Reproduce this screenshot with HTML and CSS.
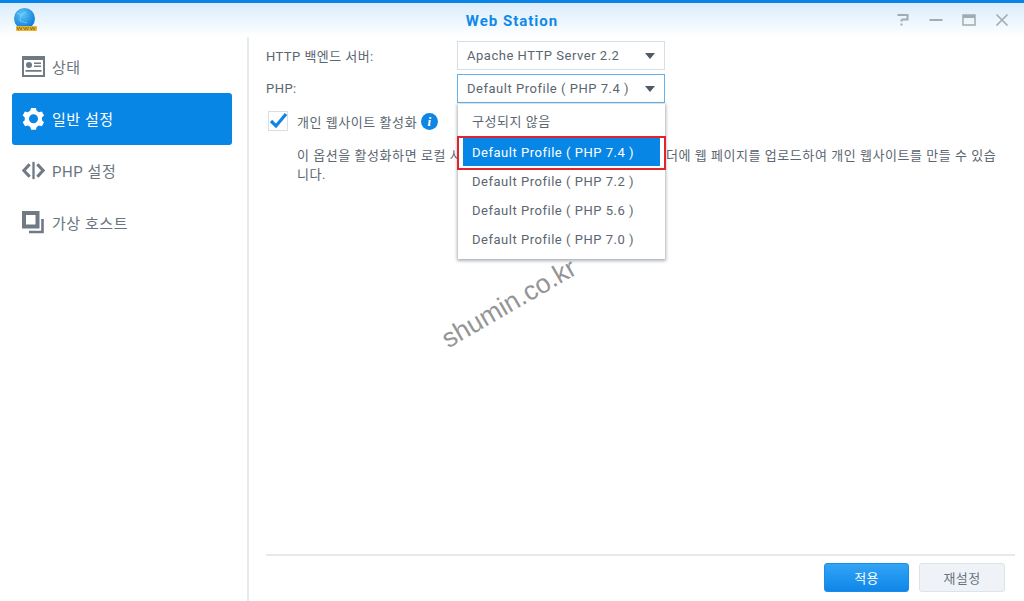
FILE: index.html
```html
<!DOCTYPE html>
<html lang="ko">
<head>
<meta charset="utf-8">
<title>Web Station</title>
<link rel="stylesheet" href="styles.css">
</head>
<body>
<div class="window">
  <header class="titlebar">
    <svg class="app-icon" viewBox="0 0 24 24">
      <defs>
        <radialGradient id="globe" cx="40%" cy="30%" r="75%">
          <stop offset="0" stop-color="#5cc8f8"/>
          <stop offset="1" stop-color="#0a74d6"/>
        </radialGradient>
      </defs>
      <circle cx="11.500" cy="10.500" r="10.500" fill="url(#globe)"/>
      <path d="M4 5l4 2 5-3M8 7l-1 6 7 2" fill="none" stroke="#a8dcfb" stroke-width=".5"/>
      <rect x="3" y="18" width="21" height="5" rx="1" fill="#eab428"/>
      <path d="M4 19l1.300 3 1.300-3 1.300 3 1.300-3M10.500 19l1.300 3 1.300-3 1.300 3 1.300-3M17 19l1.300 3 1.300-3 1.300 3 1.300-3" fill="none" stroke="#77673a" stroke-width=".7"/>
    </svg>
    <h1 class="title">Web Station</h1>
    <div class="win-controls">
      <svg class="win-icon" viewBox="0 0 14 14"><path d="M1.500 2h10v4.500h-6M5.500 6.500v2M5.500 10.500v2" fill="none" stroke="#a3aab1" stroke-width="2"/></svg>
      <svg class="win-icon" viewBox="0 0 14 14"><path d="M0.500 7h13" fill="none" stroke="#a3aab1" stroke-width="2"/></svg>
      <svg class="win-icon" viewBox="0 0 14 14"><path d="M1 2h12v10H1z" fill="none" stroke="#a3aab1" stroke-width="1.500"/><path d="M1 3.500h12" stroke="#a3aab1" stroke-width="3"/></svg>
      <svg class="win-icon" viewBox="0 0 14 14"><path d="M1.500 1.500l11 11M12.500 1.500l-11 11" fill="none" stroke="#a3aab1" stroke-width="1.600"/></svg>
    </div>
  </header>
  <div class="body">
    <nav class="sidebar">
      <a class="nav-item">
        <svg class="nav-icon" viewBox="0 0 23 23"><path d="M0 1h23v21H0z" fill="#6f7a85"/><path d="M2 5h19v15H2z" fill="#fff"/><circle cx="7" cy="10" r="3" fill="#6f7a85"/><path d="M12 7.500h7V9h-7zM12 10.500h7V12h-7zM3.500 15h16v1.700h-16z" fill="#6f7a85"/></svg>
        <span>상태</span>
      </a>
      <a class="nav-item active">
        <svg class="nav-icon" viewBox="0 0 24 24"><path fill-rule="evenodd" d="M9.500 1h5l.8 3 2.400 1.400 3-.8 2.300 4.200-2.200 2.200v2.800l2.200 2.200-2.300 4.200-3-.8-2.400 1.400-.8 3h-5l-.8-3-2.400-1.400-3 .8L.7 15.999l2.200-2.200v-2.800L.7 8.800 3 4.600l3 .8 2.400-1.400zM12 7.500a4.700 4.700 0 1 0 0 9.400 4.700 4.700 0 0 0 0-9.400z" fill="#fff"/></svg>
        <span>일반 설정</span>
      </a>
      <a class="nav-item">
        <svg class="nav-icon" viewBox="0 0 24 24"><path d="M8 5.500L2 12l6 6.500M16 5.500l6 6.500-6 6.500" fill="none" stroke="#6f7a85" stroke-width="3.200"/><path d="M12 3v18" stroke="#6f7a85" stroke-width="2.400"/></svg>
        <span>PHP 설정</span>
      </a>
      <a class="nav-item">
        <svg class="nav-icon" viewBox="0 0 23 23"><path d="M2 2h13.500v13.500H2z" fill="none" stroke="#6f7a85" stroke-width="4"/><path d="M20.500 8v13H7" fill="none" stroke="#6f7a85" stroke-width="2.600"/></svg>
        <span>가상 호스트</span>
      </a>
    </nav>
    <main class="content">
      <div class="form">
        <div class="form-row">
          <label class="form-label">HTTP 백엔드 서버:</label>
          <div class="select">
            <span>Apache HTTP Server 2.2</span>
            <i class="caret"></i>
          </div>
        </div>
        <div class="form-row">
          <label class="form-label">PHP:</label>
          <div class="select focused">
            <span>Default Profile ( PHP 7.4 )</span>
            <i class="caret"></i>
            <ul class="menu">
              <li class="menu-item first">구성되지 않음</li>
              <li class="menu-item selected">Default Profile ( PHP 7.4 )</li>
              <li class="menu-item">Default Profile ( PHP 7.2 )</li>
              <li class="menu-item">Default Profile ( PHP 5.6 )</li>
              <li class="menu-item">Default Profile ( PHP 7.0 )</li>
              <li class="red-frame"></li>
            </ul>
          </div>
        </div>
        <div class="check-row">
          <span class="checkbox">
            <svg viewBox="0 0 20 20"><path d="M3 10l5 5L18 3" fill="none" stroke="#0f86e3" stroke-width="3.200"/></svg>
          </span>
          <span>개인 웹사이트 활성화</span>
          <span class="info">i</span>
        </div>
        <p class="help">이 옵션을 활성화하면 로컬 사용자가 자신의 홈 폴더 아래 www 폴더에 웹 페이지를 업로드하여 개인 웹사이트를 만들 수 있습니다.</p>
      </div>
      <footer class="footer">
        <button class="btn primary">적용</button>
        <button class="btn">재설정</button>
      </footer>
    </main>
  </div>
  <div class="watermark">shumin.co.kr</div>
</div>
</body>
</html>
```
FILE: styles.css
```css
* { box-sizing: border-box; }
html, body { margin: 0; padding: 0; }
body {
  width: 1024px;
  height: 601px;
  overflow: hidden;
  background: #fff;
  font-family: Roboto, "Noto Sans CJK KR", sans-serif;
  font-size: 13px;
  color: #5b6670;
}
.window {
  position: relative;
  display: flex;
  flex-direction: column;
  height: 601px;
  border-top: 3px solid #0a84e6;
}
.titlebar {
  display: flex;
  align-items: center;
  height: 34px;
  flex: none;
  padding-left: 13px;
  background: linear-gradient(#d9ecfb, #fff);
  position: relative;
}
.app-icon { width: 24px; height: 24px; display: block; }
.title {
  position: absolute;
  left: 0;
  right: 0;
  top: 9px;
  margin: 0;
  text-align: center;
  font-size: 15px;
  line-height: 18px;
  font-weight: 700;
  letter-spacing: 1px;
  color: #0f8ae8;
}
.win-controls {
  position: absolute;
  right: 15px;
  top: 10px;
  display: flex;
  gap: 19px;
}
.win-icon { width: 14px; height: 14px; display: block; }
.body { display: flex; flex: 1; min-height: 0; }
.sidebar {
  width: 249px;
  flex: none;
  padding: 4px 15px 0 12px;
  border-right: 2px solid #e8ebee;
}
.nav-item {
  display: flex;
  align-items: center;
  height: 52px;
  padding: 0 0 2px 10px;
  gap: 7px;
  font-size: 15px;
  letter-spacing: .55px;
  color: #6a747e;
  border-radius: 3px;
}
.nav-item.active { background: #0786e6; color: #fff; }
.nav-icon { width: 23px; height: 23px; flex: none; display: block; }
.content {
  flex: 1;
  min-width: 0;
  padding: 4px 9px 0 17px;
  display: flex;
  flex-direction: column;
}
.form { flex: 1; }
.form-row {
  display: flex;
  align-items: center;
  height: 29px;
  margin-bottom: 4px;
}
.form-label { width: 191px; letter-spacing: .45px; }
.select {
  position: relative;
  display: flex;
  align-items: center;
  justify-content: space-between;
  width: 208px;
  height: 29px;
  padding: 0 9px;
  letter-spacing: .52px;
  border: 1px solid #d7dfe6;
  background: #fff;
}
.select.focused { border-color: #5fb3ee; }
.caret {
  width: 0;
  height: 0;
  border-left: 5px solid transparent;
  border-right: 5px solid transparent;
  border-top: 6px solid #4e5a65;
}
.menu {
  position: absolute;
  left: 0;
  top: 29px;
  width: 207px;
  height: 155px;
  margin: 0;
  padding: 2px 5px;
  list-style: none;
  background: #fff;
  box-shadow: 0 1px 3px 1px rgba(70, 85, 100, .45);
  z-index: 2;
}
.menu-item {
  display: flex;
  align-items: center;
  height: 29px;
  padding-left: 9px;
}
.menu-item.first { margin-bottom: 3px; }
.menu-item.selected {
  height: 28px;
  margin-bottom: 1px;
  background: #0786e6;
  color: #fff;
}
.red-frame {
  position: absolute;
  left: -1px;
  top: 32px;
  width: 209px;
  height: 34px;
  border: 2px solid #e2232c;
}
.check-row {
  display: flex;
  align-items: center;
  height: 22px;
  margin-top: 7px;
  padding-left: 2px;
  letter-spacing: .55px;
}
.checkbox {
  width: 20px;
  height: 20px;
  margin-right: 9px;
  border: 1px solid #d7dfe6;
  display: block;
}
.checkbox svg { display: block; width: 20px; height: 20px; margin: -1px; }
.info {
  width: 17px;
  height: 17px;
  margin-left: 4px;
  border-radius: 50%;
  background: #0f86e3;
  color: #fff;
  font: italic 700 13px/17px "Liberation Serif", serif;
  text-align: center;
}
.help {
  margin: 14px 0 0 31px;
  width: 706px;
  line-height: 19px;
  letter-spacing: .55px;
  word-break: break-all;
}
.footer {
  display: flex;
  justify-content: flex-end;
  gap: 10px;
  height: 47px;
  flex: none;
  padding: 7px 10px 0 0;
  border-top: 2px solid #e6e8ea;
}
.btn {
  width: 86px;
  height: 29px;
  border: 1px solid #dde3ea;
  border-radius: 3px;
  background: #eff3f8;
  color: #6a747e;
  font: inherit;
  letter-spacing: .4px;
}
.btn.primary {
  width: 85px;
  border-color: #1a8de8;
  background: linear-gradient(#32a4f5, #0f86e8);
  color: #fff;
}
.watermark {
  position: absolute;
  left: 434px;
  top: 285px;
  font: 26.5px "Liberation Sans", sans-serif;
  color: #959595;
  transform: rotate(-30deg);
  z-index: 3;
  white-space: nowrap;
}
```
